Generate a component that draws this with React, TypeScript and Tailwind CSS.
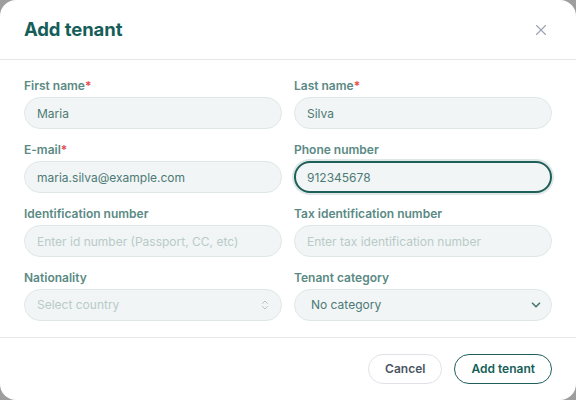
import { X, ChevronsUpDown, ChevronDown } from 'lucide-react';

const font = { fontFamily: 'Inter, "Noto Sans", sans-serif' };

const Label = ({ text, required }: { text: string; required?: boolean }) => (
  <label className="block text-[12px] font-semibold text-[#5a8a84] leading-4 mb-[3px]">
    {text}
    {required && <span className="text-[#e5484d]">*</span>}
  </label>
);

const inputBase =
  'w-full h-8 rounded-full bg-[#f1f5f5] border border-[#dfe8e7] px-3 text-[12px] text-[#4d7a75] placeholder:text-[#b9cbc8] outline-none';

export default function App() {
  return (
    <div className="w-[576px] h-[400px] bg-[#9e9e9e]" style={font}>
      <div className="w-full h-full bg-white rounded-[16px] flex flex-col overflow-hidden">
        {/* header */}
        <div className="h-[60px] flex items-center justify-between px-6 border-b border-[#e5e7eb]">
          <h2 className="text-[18.5px] font-bold text-[#165e59] tracking-[-0.005em]">Add tenant</h2>
          <button className="text-[#9aa3b2] mr-[2px]">
            <X size={18} strokeWidth={1.5} />
          </button>
        </div>

        {/* body */}
        <div className="grid grid-cols-2 gap-x-3 gap-y-[13px] px-6 pt-[18px] pb-4 border-b border-[#e5e7eb]">
          <div>
            <Label text="First name" required />
            <input className={inputBase} defaultValue="Maria" />
          </div>
          <div>
            <Label text="Last name" required />
            <input className={inputBase} defaultValue="Silva" />
          </div>
          <div>
            <Label text="E-mail" required />
            <input className={inputBase} defaultValue="maria.silva@example.com" />
          </div>
          <div>
            <Label text="Phone number" />
            <input
              className="w-full h-8 rounded-full bg-[#f1f5f5] border-2 border-[#1f5f5a] ring-2 ring-[#dfe8e7] px-[11px] text-[12px] text-[#4d7a75] outline-none"
              defaultValue="912345678"
            />
          </div>
          <div>
            <Label text="Identification number" />
            <input className={inputBase} placeholder="Enter id number (Passport, CC, etc)" />
          </div>
          <div>
            <Label text="Tax identification number" />
            <input className={inputBase} placeholder="Enter tax identification number" />
          </div>
          <div>
            <Label text="Nationality" />
            <div className="w-full h-8 rounded-full bg-[#f1f5f5] border border-[#dfe8e7] pl-3 pr-[10px] flex items-center justify-between">
              <span className="text-[12px] text-[#b9cbc8]">Select country</span>
              <ChevronsUpDown size={12} className="text-[#9fb5b2]" strokeWidth={1.5} />
            </div>
          </div>
          <div>
            <Label text="Tenant category" />
            <div className="w-full h-8 rounded-full bg-[#f1f5f5] border border-[#dfe8e7] pl-4 pr-[8px] flex items-center justify-between">
              <span className="text-[12px] text-[#4d7a75]">No category</span>
              <ChevronDown size={14} className="text-[#4d7a75]" strokeWidth={3} />
            </div>
          </div>
        </div>

        {/* footer */}
        <div className="flex justify-end gap-3 px-6 pt-4">
          <button className="h-[30px] px-4 rounded-full border border-[#dfe3e8] text-[12px] font-semibold text-[#4b5563]">
            Cancel
          </button>
          <button className="h-[30px] px-4 rounded-full border border-[#1f5f5a] text-[12px] font-semibold text-[#165e59]">
            Add tenant
          </button>
        </div>
      </div>
    </div>
  );
}
